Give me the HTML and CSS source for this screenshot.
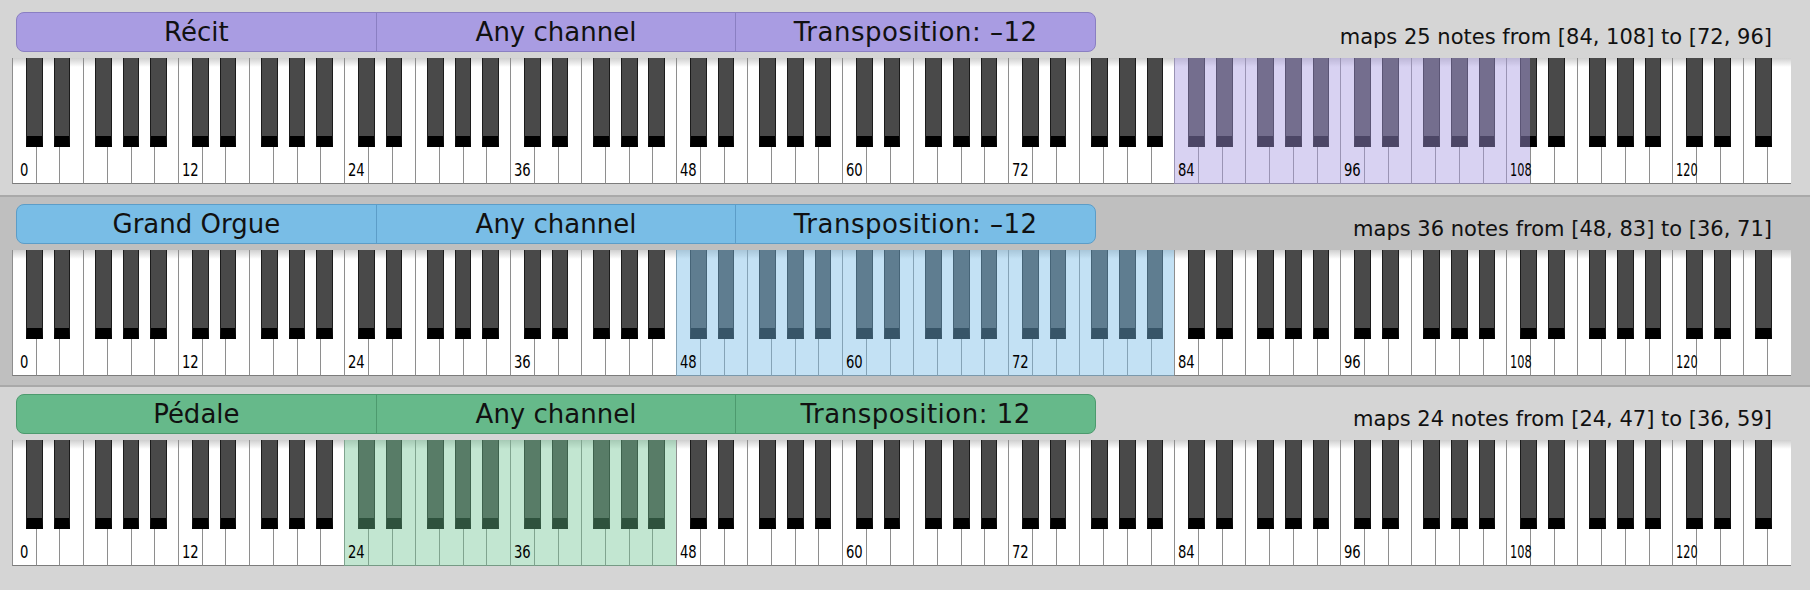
FILE: index.html
```html
<!DOCTYPE html>
<html lang="en">
<head>
<meta charset="UTF-8" />
<title>Keyboard mappings</title>
<link rel="stylesheet" href="styles.css">
</head>
<body>

<div class="mapping recit">
  <div class="top">
    <div class="header">
      <span>Récit</span>
      <span>Any channel</span>
      <span class="transpose">Transposition: –12</span>
    </div>
    <div class="summary">maps 25 notes from [84, 108] to [72, 96]</div>
  </div>
  <div class="keyboard" data-from="84" data-to="108"></div>
</div>

<div class="mapping grand-orgue selected">
  <div class="top">
    <div class="header">
      <span>Grand Orgue</span>
      <span>Any channel</span>
      <span class="transpose">Transposition: –12</span>
    </div>
    <div class="summary">maps 36 notes from [48, 83] to [36, 71]</div>
  </div>
  <div class="keyboard" data-from="48" data-to="83"></div>
</div>

<div class="mapping pedale">
  <div class="top">
    <div class="header">
      <span>Pédale</span>
      <span>Any channel</span>
      <span class="transpose">Transposition: 12</span>
    </div>
    <div class="summary">maps 24 notes from [24, 47] to [36, 59]</div>
  </div>
  <div class="keyboard" data-from="24" data-to="47"></div>
</div>

<script>
// Build a full 128 note keyboard (MIDI 0..127) for each mapping
const WHITE_STEPS = [0, 2, 4, 5, 7, 9, 11];
const WHITE_COUNT = 75;

function whiteIndex(note) {
  const octave = Math.floor(note / 12);
  let idx = 0;
  WHITE_STEPS.forEach((s, i) => { if (s <= note % 12) idx = i; });
  return octave * 7 + idx;
}

document.querySelectorAll('.keyboard').forEach(kb => {
  for (let n = 0; n < 128; n++) {
    if (WHITE_STEPS.includes(n % 12)) {
      const key = document.createElement('div');
      key.className = 'white-key';
      if (n % 12 === 0) {
        const label = document.createElement('span');
        label.className = n >= 100 ? 'label wide' : 'label';
        label.textContent = n;
        key.appendChild(label);
      }
      kb.appendChild(key);
    }
  }

  // black keys sit on a 12-per-octave grid
  const octaveWidth = 7 / WHITE_COUNT * 100;
  for (let n = 0; n < 128; n++) {
    if (!WHITE_STEPS.includes(n % 12)) {
      const key = document.createElement('div');
      key.className = 'black-key';
      key.style.left = (n / 12 * octaveWidth) + '%';
      kb.appendChild(key);
    }
  }

  // highlighted source range
  const from = whiteIndex(+kb.dataset.from);
  const to = whiteIndex(+kb.dataset.to) + 1;
  const range = document.createElement('div');
  range.className = 'range';
  range.style.left = (from / WHITE_COUNT * 100) + '%';
  range.style.width = ((to - from) / WHITE_COUNT * 100) + '%';
  kb.appendChild(range);
});
</script>

</body>
</html>
```

FILE: styles.css
```css
body {
  margin: 0;
  background: #d5d5d5;
  font-family: "DejaVu Sans", Verdana, sans-serif;
  color: #111;
}
.mapping {
  background: #d5d5d5;
  padding: 7px 19px 9px 12px;
  border-top: 2px solid #a9a9a9;
}
.mapping:first-child {
  border-top: none;
  padding-top: 12px;
  padding-bottom: 11px;
}
.mapping.selected {
  background: #bfbfbf;
}
.top {
  display: flex;
  justify-content: space-between;
  align-items: flex-start;
}
.header {
  display: flex;
  margin-left: 4px;
  width: 1080px;
  height: 40px;
  box-sizing: border-box;
  border: 1px solid;
  border-radius: 8px;
  overflow: hidden;
}
.header span {
  flex: 1;
  display: flex;
  align-items: center;
  justify-content: center;
  font-size: 26px;
  border-left: 1px solid;
  border-color: inherit;
}
.header span:first-child {
  border-left: none;
}
.header .transpose {
  letter-spacing: 0.5px;
}
.summary {
  margin-top: 13px;
  margin-right: 19px;
  font-size: 21px;
  line-height: 24px;
}
/* row colours */
.recit .header {
  background: #a99ce2;
  border-color: #8a7fc2;
}
.recit .range {
  background: rgba(169, 156, 226, 0.45);
}
.grand-orgue .header {
  background: #79bde6;
  border-color: #5c9dc8;
}
.grand-orgue .range {
  background: rgba(121, 189, 230, 0.45);
}
.pedale .header {
  background: #66b98a;
  border-color: #4d9a6e;
}
.pedale .range {
  background: rgba(110, 196, 146, 0.42);
}
/* Keyboard */
.keyboard {
  position: relative;
  display: flex;
  margin-top: 6px;
  height: 126px;
}
.white-key {
  flex: 1 1 0;
  min-width: 0;
  box-sizing: border-box;
  border-left: 1px solid #8e8e8e;
  border-bottom: 1px solid #7c7c7c;
  background: linear-gradient(#cfcfcf, #fff 9px);
  display: flex;
  align-items: flex-end;
  padding: 0 0 4px 3px;
}
.white-key:last-of-type {
  border-right: 1px solid #8e8e8e;
}
/* labels stay readable on top of the range tint */
.label {
  position: relative;
  z-index: 2;
  font-family: "DejaVu Sans Condensed", "DejaVu Sans", sans-serif;
  font-size: 17px;
  line-height: 17px;
  color: #000;
  transform: scaleX(0.86);
  transform-origin: left bottom;
  white-space: nowrap;
}
.white-key:first-child .label {
  margin-left: 4px;
}
.label.wide {
  transform: scaleX(0.74);
}
.black-key {
  position: absolute;
  top: 0;
  width: 0.94%;
  height: 89px;
  box-sizing: border-box;
  background: #494949;
  border: 1px solid #1c1c1c;
  border-top: none;
  border-bottom: 11px solid #000;
}
.range {
  position: absolute;
  z-index: 1;
  top: 0;
  bottom: 0;
}
```
